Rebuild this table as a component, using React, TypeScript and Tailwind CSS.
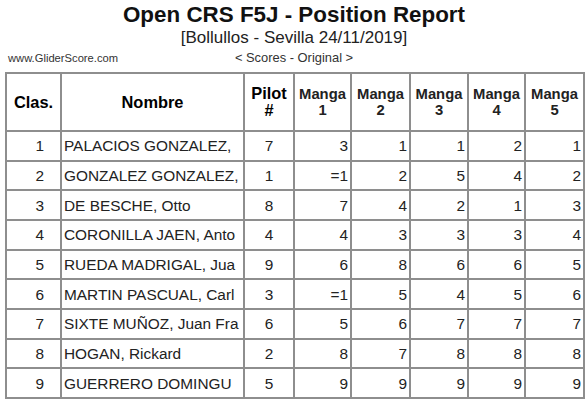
import React from "react";

const rows = [
  { pos: 1, name: "PALACIOS GONZALEZ,", pilot: 7, r: ["3", "1", "1", "2", "1"] },
  { pos: 2, name: "GONZALEZ GONZALEZ,", pilot: 1, r: ["=1", "2", "5", "4", "2"] },
  { pos: 3, name: "DE BESCHE, Otto", pilot: 8, r: ["7", "4", "2", "1", "3"] },
  { pos: 4, name: "CORONILLA JAEN, Anto", pilot: 4, r: ["4", "3", "3", "3", "4"] },
  { pos: 5, name: "RUEDA MADRIGAL, Jua", pilot: 9, r: ["6", "8", "6", "6", "5"] },
  { pos: 6, name: "MARTIN PASCUAL, Carl", pilot: 3, r: ["=1", "5", "4", "5", "6"] },
  { pos: 7, name: "SIXTE MUÑOZ, Juan Fra", pilot: 6, r: ["5", "6", "7", "7", "7"] },
  { pos: 8, name: "HOGAN, Rickard", pilot: 2, r: ["8", "7", "8", "8", "8"] },
  { pos: 9, name: "GUERRERO DOMINGU", pilot: 5, r: ["9", "9", "9", "9", "9"] },
];

const cell = "border-2 border-[#8e8e8e]";

export default function App() {
  return (
    <main className="w-[587px] h-[403px] bg-white text-black overflow-hidden" style={{ fontFamily: '"Liberation Sans", Arial, sans-serif' }}>
      <div className="w-[578px] ml-[5px] pt-[2px]">
        {/* Header */}
        <h1 className="text-center font-bold text-[22.4px] leading-[26px] text-[#111]">Open CRS F5J - Position Report</h1>
        <div className="text-center text-[17px] leading-[20px] text-[#222]">[Bollullos - Sevilla 24/11/2019]</div>
        <div className="grid grid-cols-[1fr_auto_1fr] items-end h-[24px] pb-[7px] text-[#333]">
          <span className="pl-[3px] text-[11.2px] leading-[14px]">www.GliderScore.com</span>
          <span className="text-[12.9px] leading-[15px]">&lt; Scores - Original &gt;</span>
          <span />
        </div>

        {/* Table */}
        <table className="w-[578px] border-collapse table-fixed">
          <colgroup>
            <col className="w-[55px]" />
            <col className="w-[183px]" />
            <col className="w-[50px]" />
            <col className="w-[57px]" />
            <col className="w-[59px]" />
            <col className="w-[58px]" />
            <col className="w-[57px]" />
            <col className="w-[59px]" />
          </colgroup>
          <thead>
            <tr className="h-[58px]">
              <th className={`${cell} text-[16.4px] leading-[17px] font-bold text-center`}>Clas.</th>
              <th className={`${cell} text-[16.4px] leading-[17px] font-bold text-center`}>Nombre</th>
              <th className={`${cell} text-[16.4px] leading-[17px] font-bold text-center`}>Pilot<br />#</th>
              {[1, 2, 3, 4, 5].map(n => (
                <th key={n} className={`${cell} text-[14.8px] leading-[16px] font-bold text-center text-[#222]`}>Manga<br />{n}</th>
              ))}
            </tr>
          </thead>
          <tbody className="text-[15.4px] text-[#222]">
            {rows.map(row => (
              <tr key={row.pos} className="h-[29.67px]">
                <td className={`${cell} text-right pr-4`}>{row.pos}</td>
                <td className={`${cell} text-left pl-[2px] whitespace-nowrap overflow-hidden`}>{row.name}</td>
                <td className={`${cell} text-center`}>{row.pilot}</td>
                {row.r.map((v, i) => (
                  <td key={i} className={`${cell} text-right pr-[2px]`}>{v}</td>
                ))}
              </tr>
            ))}
          </tbody>
        </table>
      </div>
    </main>
  );
}
